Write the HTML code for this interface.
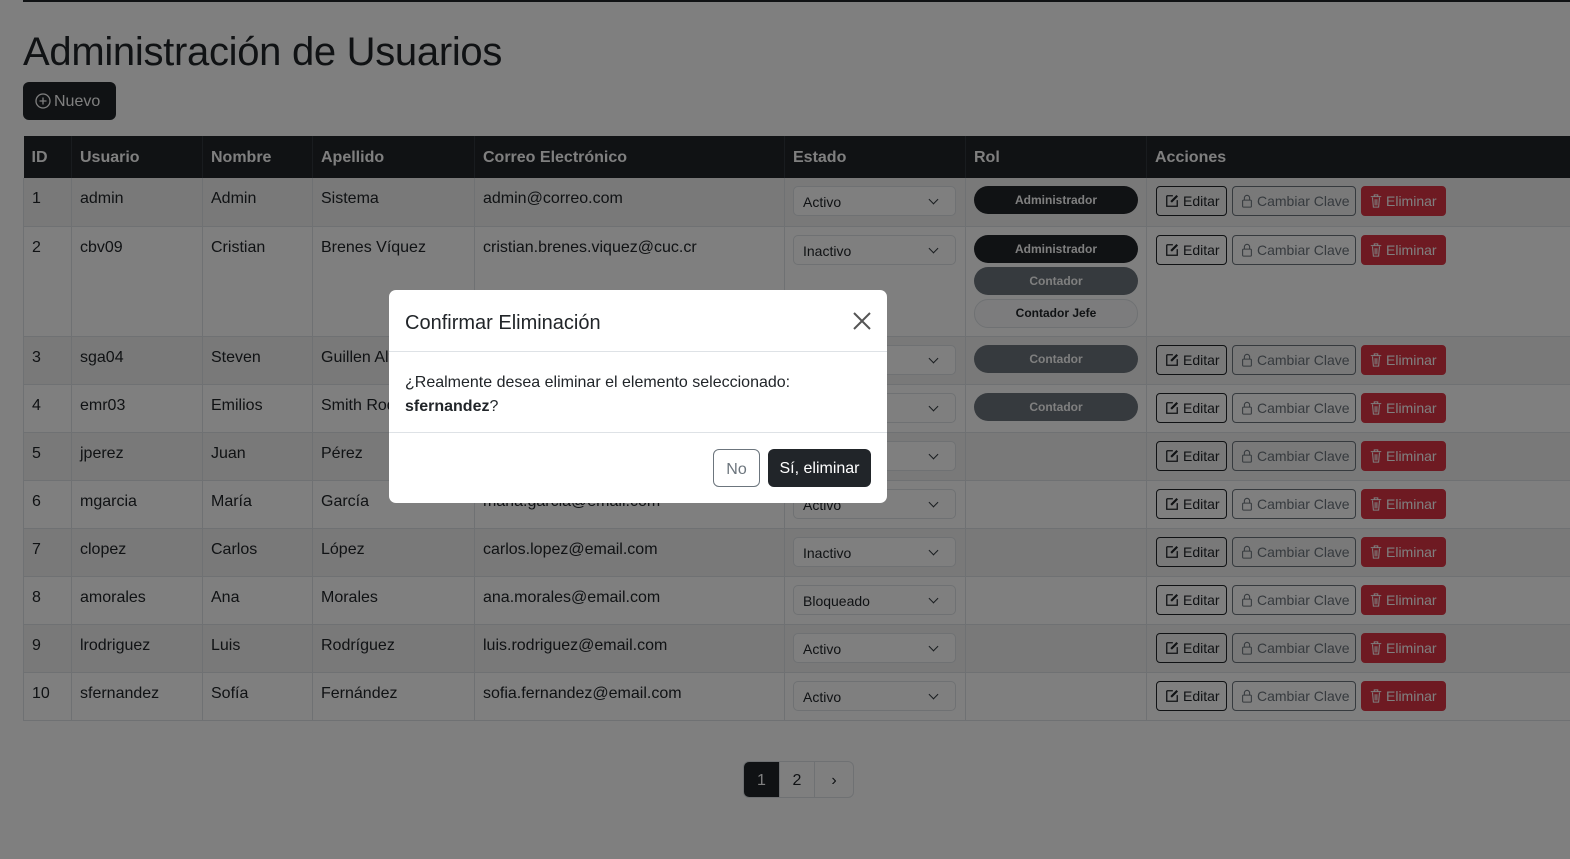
<!DOCTYPE html>
<html><head><meta charset="utf-8"><style>
*{box-sizing:border-box;margin:0;padding:0}
body{width:1570px;height:859px;overflow:hidden;background:#fff;font-family:"Liberation Sans",sans-serif;color:#212529;font-size:16px;position:relative}
.topbar{position:absolute;left:23px;top:0;width:1547px;height:2px;background:#212529}
h1{position:absolute;left:23px;top:30px;font-size:40px;font-weight:500;letter-spacing:-0.3px}
.nuevo{position:absolute;left:23px;top:82px;width:93px;height:38px;background:#212529;color:#fff;border-radius:6px;font-size:16px;line-height:40px;padding-left:12px}
.nuevo svg{vertical-align:-3px;margin-right:3px}
table{position:absolute;left:23px;top:136px;width:1560px;border-collapse:collapse;table-layout:fixed}
th{background:#212529;color:#fff;text-align:left;font-weight:bold;height:42px;padding:2px 8px 0;font-size:16px;border-right:1px solid #32383e}
td{vertical-align:top;padding:12px 8px 0;height:48px;border:1px solid #dee2e6;border-top:none;font-size:16px}
td.c{padding-top:8px}
td.a{padding-left:9px}
tr.s td{background:#f2f2f2}
.sel{width:163px;height:30px;border:1px solid #dee2e6;border-radius:5px;font-size:14px;line-height:30px;padding-left:9px;position:relative;background:#fff}
tr.s .sel{background:#fff}
.sel:after{content:"";position:absolute;right:18px;top:9px;width:6px;height:6px;border-right:1.6px solid #343a40;border-bottom:1.6px solid #343a40;transform:rotate(45deg)}
.pill{width:164px;height:28px;border-radius:14px;font-size:12px;font-weight:bold;text-align:center;line-height:29px;margin-bottom:4px}
.pd{background:#212529;color:#fff}.pg{background:#6c757d;color:#fff}.pl{background:#f8f9fa;border:1px solid #dee2e6;color:#212529;line-height:27px;height:29px}
.acts{display:flex;gap:5px;white-space:nowrap}
.b{height:30px;border-radius:4px;font-size:14px;line-height:29px;padding:0 8px;border:1px solid}
.be{border-color:#212529;color:#212529;width:71px}
.bc{border-color:#6c757d;color:#6c757d;width:124px}
.bd{background:#dc3545;border-color:#dc3545;color:#fff;width:85px}
.b svg{vertical-align:-2px;margin-right:4px}
.pag{position:absolute;left:743px;top:761px;display:flex;height:37px;border:1px solid #dee2e6;border-radius:6px;overflow:hidden}
.pag div{width:35px;text-align:center;line-height:37px;font-size:16px}
.pag div:last-child{width:39px}
.pag .a{background:#212529;color:#fff}
.pag div+div{border-left:1px solid #dee2e6}
.ov{position:absolute;left:0;top:0;width:1570px;height:859px;background:rgba(0,0,0,.5)}
.modal{position:absolute;left:389px;top:290px;width:498px;height:213px;background:#fff;border-radius:7px}
.mh{height:62px;border-bottom:1px solid #dee2e6;padding:22px 16px 0;font-size:20px;font-weight:500;position:relative}
.x{position:absolute;right:16px;top:22px}
.mb{height:81px;border-bottom:1px solid #dee2e6;padding:19px 16px 0;font-size:16px;line-height:24px}
.mf{position:relative;height:70px}
.no{position:absolute;left:324px;top:16px;width:47px;height:38px;border:1px solid #6c757d;border-radius:6px;color:#6c757d;text-align:center;line-height:40px}
.si{position:absolute;left:379px;top:16px;width:103px;height:38px;background:#212529;color:#fff;border-radius:6px;text-align:center;line-height:40px}
</style></head><body>
<div class="topbar"></div>
<h1>Administración de Usuarios</h1>
<div class="nuevo"><svg width="16" height="16" viewBox="0 0 16 16"><circle cx="8" cy="8" r="7" fill="none" stroke="#fff" stroke-width="1.3"/><path d="M8 4.5v7M4.5 8h7" stroke="#fff" stroke-width="1.3"/></svg>Nuevo</div>
<table>
<colgroup><col style="width:48px"><col style="width:131px"><col style="width:110px"><col style="width:162px"><col style="width:310px"><col style="width:181px"><col style="width:181px"><col></colgroup>
<tr><th>ID</th><th>Usuario</th><th>Nombre</th><th>Apellido</th><th>Correo Electrónico</th><th>Estado</th><th>Rol</th><th>Acciones</th></tr>
<tr class="s"><td>1</td><td>admin</td><td>Admin</td><td>Sistema</td><td>admin@correo.com</td><td class="c"><div class="sel">Activo</div></td><td class="c"><div class="pill pd">Administrador</div></td><td class="c a"><div class="acts"><div class="b be"><svg width="14" height="14" viewBox="0 0 16 16"><path d="M2 2h7M2 2v12h12V7" fill="none" stroke="currentColor" stroke-width="1.5"/><path d="M7 9l7-7" stroke="currentColor" stroke-width="2.5"/></svg>Editar</div><div class="b bc"><svg width="12" height="14" viewBox="0 0 12 16"><rect x="1" y="7" width="10" height="8" rx="1" fill="none" stroke="currentColor" stroke-width="1.2"/><path d="M3 7V4.5a3 3 0 016 0V7" fill="none" stroke="currentColor" stroke-width="1.2"/></svg>Cambiar Clave</div><div class="b bd"><svg width="12" height="14" viewBox="0 0 12 16"><path d="M0 3h12M4 3V1h4v2M2 4l1 11h6l1-11M5 6v7M7 6v7" fill="none" stroke="currentColor" stroke-width="1.2"/></svg>Eliminar</div></div></td></tr>
<tr><td style="height:110px">2</td><td>cbv09</td><td>Cristian</td><td>Brenes Víquez</td><td>cristian.brenes.viquez@cuc.cr</td><td class="c"><div class="sel">Inactivo</div></td><td class="c"><div class="pill pd">Administrador</div><div class="pill pg">Contador</div><div class="pill pl">Contador Jefe</div></td><td class="c a"><div class="acts"><div class="b be"><svg width="14" height="14" viewBox="0 0 16 16"><path d="M2 2h7M2 2v12h12V7" fill="none" stroke="currentColor" stroke-width="1.5"/><path d="M7 9l7-7" stroke="currentColor" stroke-width="2.5"/></svg>Editar</div><div class="b bc"><svg width="12" height="14" viewBox="0 0 12 16"><rect x="1" y="7" width="10" height="8" rx="1" fill="none" stroke="currentColor" stroke-width="1.2"/><path d="M3 7V4.5a3 3 0 016 0V7" fill="none" stroke="currentColor" stroke-width="1.2"/></svg>Cambiar Clave</div><div class="b bd"><svg width="12" height="14" viewBox="0 0 12 16"><path d="M0 3h12M4 3V1h4v2M2 4l1 11h6l1-11M5 6v7M7 6v7" fill="none" stroke="currentColor" stroke-width="1.2"/></svg>Eliminar</div></div></td></tr>
<tr class="s"><td>3</td><td>sga04</td><td>Steven</td><td>Guillen Alfaro</td><td>steven.guillen@cuc.cr</td><td class="c"><div class="sel">Activo</div></td><td class="c"><div class="pill pg">Contador</div></td><td class="c a"><div class="acts"><div class="b be"><svg width="14" height="14" viewBox="0 0 16 16"><path d="M2 2h7M2 2v12h12V7" fill="none" stroke="currentColor" stroke-width="1.5"/><path d="M7 9l7-7" stroke="currentColor" stroke-width="2.5"/></svg>Editar</div><div class="b bc"><svg width="12" height="14" viewBox="0 0 12 16"><rect x="1" y="7" width="10" height="8" rx="1" fill="none" stroke="currentColor" stroke-width="1.2"/><path d="M3 7V4.5a3 3 0 016 0V7" fill="none" stroke="currentColor" stroke-width="1.2"/></svg>Cambiar Clave</div><div class="b bd"><svg width="12" height="14" viewBox="0 0 12 16"><path d="M0 3h12M4 3V1h4v2M2 4l1 11h6l1-11M5 6v7M7 6v7" fill="none" stroke="currentColor" stroke-width="1.2"/></svg>Eliminar</div></div></td></tr>
<tr><td>4</td><td>emr03</td><td>Emilios</td><td>Smith Rodríguez</td><td>emilios.smith@cuc.cr</td><td class="c"><div class="sel">Activo</div></td><td class="c"><div class="pill pg">Contador</div></td><td class="c a"><div class="acts"><div class="b be"><svg width="14" height="14" viewBox="0 0 16 16"><path d="M2 2h7M2 2v12h12V7" fill="none" stroke="currentColor" stroke-width="1.5"/><path d="M7 9l7-7" stroke="currentColor" stroke-width="2.5"/></svg>Editar</div><div class="b bc"><svg width="12" height="14" viewBox="0 0 12 16"><rect x="1" y="7" width="10" height="8" rx="1" fill="none" stroke="currentColor" stroke-width="1.2"/><path d="M3 7V4.5a3 3 0 016 0V7" fill="none" stroke="currentColor" stroke-width="1.2"/></svg>Cambiar Clave</div><div class="b bd"><svg width="12" height="14" viewBox="0 0 12 16"><path d="M0 3h12M4 3V1h4v2M2 4l1 11h6l1-11M5 6v7M7 6v7" fill="none" stroke="currentColor" stroke-width="1.2"/></svg>Eliminar</div></div></td></tr>
<tr class="s"><td>5</td><td>jperez</td><td>Juan</td><td>Pérez</td><td>juan.perez@email.com</td><td class="c"><div class="sel">Activo</div></td><td></td><td class="c a"><div class="acts"><div class="b be"><svg width="14" height="14" viewBox="0 0 16 16"><path d="M2 2h7M2 2v12h12V7" fill="none" stroke="currentColor" stroke-width="1.5"/><path d="M7 9l7-7" stroke="currentColor" stroke-width="2.5"/></svg>Editar</div><div class="b bc"><svg width="12" height="14" viewBox="0 0 12 16"><rect x="1" y="7" width="10" height="8" rx="1" fill="none" stroke="currentColor" stroke-width="1.2"/><path d="M3 7V4.5a3 3 0 016 0V7" fill="none" stroke="currentColor" stroke-width="1.2"/></svg>Cambiar Clave</div><div class="b bd"><svg width="12" height="14" viewBox="0 0 12 16"><path d="M0 3h12M4 3V1h4v2M2 4l1 11h6l1-11M5 6v7M7 6v7" fill="none" stroke="currentColor" stroke-width="1.2"/></svg>Eliminar</div></div></td></tr>
<tr><td>6</td><td>mgarcia</td><td>María</td><td>García</td><td>maria.garcia@email.com</td><td class="c"><div class="sel">Activo</div></td><td></td><td class="c a"><div class="acts"><div class="b be"><svg width="14" height="14" viewBox="0 0 16 16"><path d="M2 2h7M2 2v12h12V7" fill="none" stroke="currentColor" stroke-width="1.5"/><path d="M7 9l7-7" stroke="currentColor" stroke-width="2.5"/></svg>Editar</div><div class="b bc"><svg width="12" height="14" viewBox="0 0 12 16"><rect x="1" y="7" width="10" height="8" rx="1" fill="none" stroke="currentColor" stroke-width="1.2"/><path d="M3 7V4.5a3 3 0 016 0V7" fill="none" stroke="currentColor" stroke-width="1.2"/></svg>Cambiar Clave</div><div class="b bd"><svg width="12" height="14" viewBox="0 0 12 16"><path d="M0 3h12M4 3V1h4v2M2 4l1 11h6l1-11M5 6v7M7 6v7" fill="none" stroke="currentColor" stroke-width="1.2"/></svg>Eliminar</div></div></td></tr>
<tr class="s"><td>7</td><td>clopez</td><td>Carlos</td><td>López</td><td>carlos.lopez@email.com</td><td class="c"><div class="sel">Inactivo</div></td><td></td><td class="c a"><div class="acts"><div class="b be"><svg width="14" height="14" viewBox="0 0 16 16"><path d="M2 2h7M2 2v12h12V7" fill="none" stroke="currentColor" stroke-width="1.5"/><path d="M7 9l7-7" stroke="currentColor" stroke-width="2.5"/></svg>Editar</div><div class="b bc"><svg width="12" height="14" viewBox="0 0 12 16"><rect x="1" y="7" width="10" height="8" rx="1" fill="none" stroke="currentColor" stroke-width="1.2"/><path d="M3 7V4.5a3 3 0 016 0V7" fill="none" stroke="currentColor" stroke-width="1.2"/></svg>Cambiar Clave</div><div class="b bd"><svg width="12" height="14" viewBox="0 0 12 16"><path d="M0 3h12M4 3V1h4v2M2 4l1 11h6l1-11M5 6v7M7 6v7" fill="none" stroke="currentColor" stroke-width="1.2"/></svg>Eliminar</div></div></td></tr>
<tr><td>8</td><td>amorales</td><td>Ana</td><td>Morales</td><td>ana.morales@email.com</td><td class="c"><div class="sel">Bloqueado</div></td><td></td><td class="c a"><div class="acts"><div class="b be"><svg width="14" height="14" viewBox="0 0 16 16"><path d="M2 2h7M2 2v12h12V7" fill="none" stroke="currentColor" stroke-width="1.5"/><path d="M7 9l7-7" stroke="currentColor" stroke-width="2.5"/></svg>Editar</div><div class="b bc"><svg width="12" height="14" viewBox="0 0 12 16"><rect x="1" y="7" width="10" height="8" rx="1" fill="none" stroke="currentColor" stroke-width="1.2"/><path d="M3 7V4.5a3 3 0 016 0V7" fill="none" stroke="currentColor" stroke-width="1.2"/></svg>Cambiar Clave</div><div class="b bd"><svg width="12" height="14" viewBox="0 0 12 16"><path d="M0 3h12M4 3V1h4v2M2 4l1 11h6l1-11M5 6v7M7 6v7" fill="none" stroke="currentColor" stroke-width="1.2"/></svg>Eliminar</div></div></td></tr>
<tr class="s"><td>9</td><td>lrodriguez</td><td>Luis</td><td>Rodríguez</td><td>luis.rodriguez@email.com</td><td class="c"><div class="sel">Activo</div></td><td></td><td class="c a"><div class="acts"><div class="b be"><svg width="14" height="14" viewBox="0 0 16 16"><path d="M2 2h7M2 2v12h12V7" fill="none" stroke="currentColor" stroke-width="1.5"/><path d="M7 9l7-7" stroke="currentColor" stroke-width="2.5"/></svg>Editar</div><div class="b bc"><svg width="12" height="14" viewBox="0 0 12 16"><rect x="1" y="7" width="10" height="8" rx="1" fill="none" stroke="currentColor" stroke-width="1.2"/><path d="M3 7V4.5a3 3 0 016 0V7" fill="none" stroke="currentColor" stroke-width="1.2"/></svg>Cambiar Clave</div><div class="b bd"><svg width="12" height="14" viewBox="0 0 12 16"><path d="M0 3h12M4 3V1h4v2M2 4l1 11h6l1-11M5 6v7M7 6v7" fill="none" stroke="currentColor" stroke-width="1.2"/></svg>Eliminar</div></div></td></tr>
<tr><td>10</td><td>sfernandez</td><td>Sofía</td><td>Fernández</td><td>sofia.fernandez@email.com</td><td class="c"><div class="sel">Activo</div></td><td></td><td class="c a"><div class="acts"><div class="b be"><svg width="14" height="14" viewBox="0 0 16 16"><path d="M2 2h7M2 2v12h12V7" fill="none" stroke="currentColor" stroke-width="1.5"/><path d="M7 9l7-7" stroke="currentColor" stroke-width="2.5"/></svg>Editar</div><div class="b bc"><svg width="12" height="14" viewBox="0 0 12 16"><rect x="1" y="7" width="10" height="8" rx="1" fill="none" stroke="currentColor" stroke-width="1.2"/><path d="M3 7V4.5a3 3 0 016 0V7" fill="none" stroke="currentColor" stroke-width="1.2"/></svg>Cambiar Clave</div><div class="b bd"><svg width="12" height="14" viewBox="0 0 12 16"><path d="M0 3h12M4 3V1h4v2M2 4l1 11h6l1-11M5 6v7M7 6v7" fill="none" stroke="currentColor" stroke-width="1.2"/></svg>Eliminar</div></div></td></tr>
</table>
<div class="pag"><div class="a">1</div><div>2</div><div>&#8250;</div></div>
<div class="ov"></div>
<div class="modal">
<div class="mh">Confirmar Eliminación<svg class="x" width="18" height="18" viewBox="0 0 18 18"><path d="M1 1l16 16M17 1L1 17" stroke="#555" stroke-width="2"/></svg></div>
<div class="mb">¿Realmente desea eliminar el elemento seleccionado:<br><b>sfernandez</b>?</div>
<div class="mf"><div class="no">No</div><div class="si">Sí, eliminar</div></div>
</div>
</body></html>
